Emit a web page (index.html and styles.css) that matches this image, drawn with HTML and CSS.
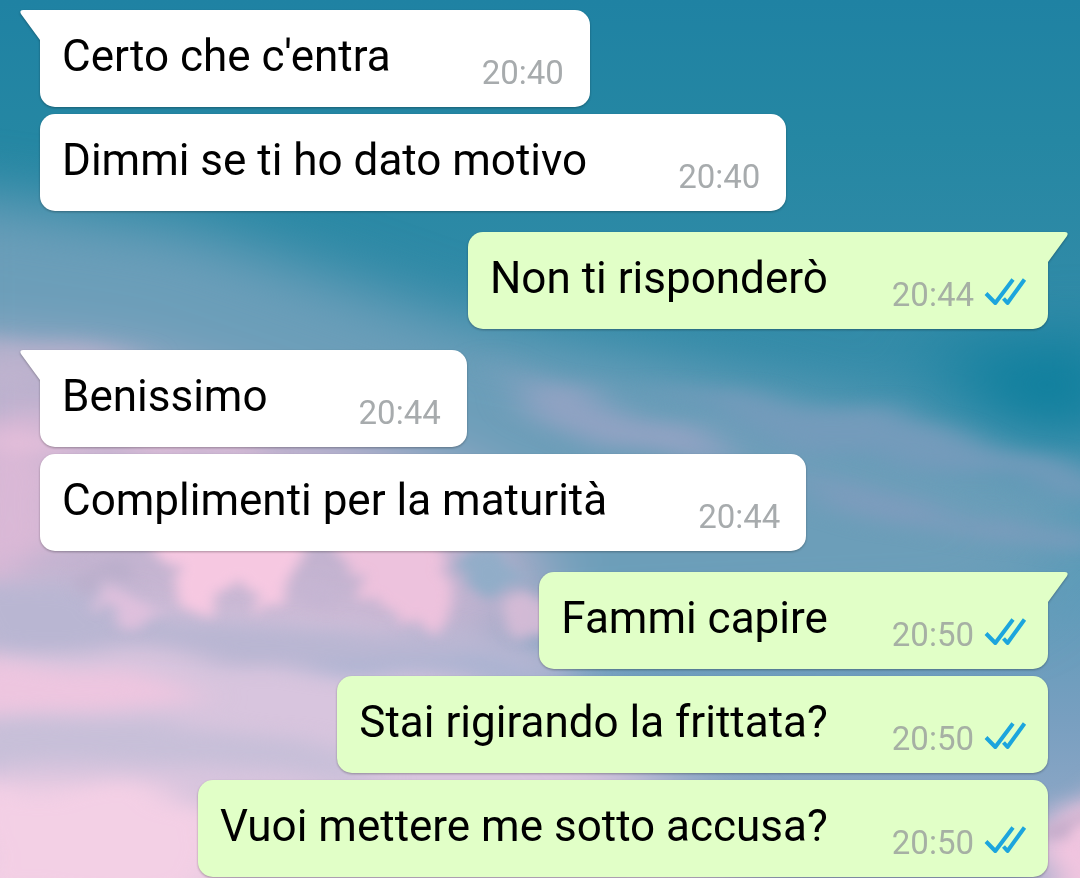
FILE: index.html
```html
<!DOCTYPE html>
<html lang="it">
<head><meta charset="utf-8"/>
<meta name="viewport" content="width=device-width, initial-scale=1">
<title>Chat</title>
<link rel="stylesheet" href="styles.css">
</head>
<body>
<!-- wallpaper: teal sky, pink clouds -->
<svg class="wallpaper" viewBox="0 0 1080 878" preserveAspectRatio="xMidYMid slice" aria-hidden="true">
    <defs>
    <linearGradient id="sky" x1="0" y1="0" x2="0" y2="1">
        <stop offset="0" stop-color="#1f82a3"/>
        <stop offset="0.16" stop-color="#2587a3"/>
        <stop offset="0.4" stop-color="#358ca9"/>
        <stop offset="0.62" stop-color="#549ab7"/>
        <stop offset="0.82" stop-color="#789fc0"/>
        <stop offset="1" stop-color="#9bacca"/>
    </linearGradient>
    <filter id="soft" x="-20%" y="-20%" width="140%" height="140%" color-interpolation-filters="sRGB"><feGaussianBlur stdDeviation="40 30"/></filter>
    <!-- the noise frays the edges into wisps -->
    <filter id="medium" x="-20%" y="-20%" width="140%" height="140%" color-interpolation-filters="sRGB">
        <feTurbulence type="fractalNoise" baseFrequency="0.008 0.03" numOctaves="3" seed="4" result="noise"/>
        <feDisplacementMap in="SourceGraphic" in2="noise" scale="50" xChannelSelector="R" yChannelSelector="G"/>
        <feGaussianBlur stdDeviation="20 9"/>
    </filter>
    <filter id="fine" x="-20%" y="-20%" width="140%" height="140%" color-interpolation-filters="sRGB">
        <feTurbulence type="fractalNoise" baseFrequency="0.03 0.03" numOctaves="3" seed="9" result="noise"/>
        <feDisplacementMap in="SourceGraphic" in2="noise" scale="44" xChannelSelector="R" yChannelSelector="G"/>
        <feGaussianBlur stdDeviation="7 6"/>
    </filter>
    </defs>
    <rect width="1080" height="878" fill="url(#sky)"/>

    <g filter="url(#soft)">
        <path d="M-80 190 L190 230 L450 320 L700 375 L880 420 L1120 500 L1000 620 L560 640 L-80 600Z" fill="#6c9eb9"/>
        <path d="M-80 340 L120 360 L300 410 L500 490 L560 640 L-80 700Z" fill="#c3b3d0"/>
        <path d="M-80 600 L350 620 L560 690 L760 878 L700 960 L-80 960Z" fill="#d8c5de"/>
        <path d="M930 350 L1120 330 V440 L1000 430Z" fill="#0e7f9d"/>
    </g>
    <g filter="url(#medium)">
        <path d="M-40 345 L80 350 L150 362 L20 390 L-40 390Z" fill="#c8b5d0" opacity="0.6"/>
        <path d="M-40 430 L50 410 L60 560 L-40 590Z" fill="#e4bad8" opacity="0.7"/>
        <path d="M-20 450 H250 V438 H-20Z" fill="#eac1dc"/>
        <path d="M490 360 L600 400 L740 452 L690 470 L560 425Z" fill="#9aa4c6" opacity="0.8"/>
        <path d="M640 385 L800 400 L930 420 L1100 475 L1100 495 L960 475 L800 450Z" fill="#749bbb"/>
        <path d="M800 475 L900 500 L1100 535 L1100 560 L920 530 L800 500Z" fill="#7d9cbd"/>
        <path d="M-40 585 L60 580 L190 615 L540 650 L560 690 L300 670 L-40 640Z" fill="#b9b6d2"/>
        <path d="M-40 656 L110 664 L220 700 L-40 715Z" fill="#f1c6df" opacity="0.85"/>
        <path d="M-40 722 L160 722 L360 755 L360 780 L150 760 L-40 762Z" fill="#c7bfd8"/>
        <path d="M-40 785 L170 790 L230 815 L210 900 L-40 900Z" fill="#f6d0e6" opacity="0.9"/>
        <path d="M310 665 H560 V680 H310Z" fill="#a5b2d1"/>
        <path d="M1045 815 L1120 785 V910 H1045Z" fill="#f5c6e0"/>
    </g>
    <g filter="url(#fine)">
        <path d="M155 530 H310 L290 580 L263 622 L250 590 L220 595 L205 613 L180 600Z" fill="#f6c8e1"/>
        <path d="M335 530 H432 L445 590 L456 616 L438 638 L405 625 L370 610Z" fill="#f2c3de" opacity="0.9"/>
        <path d="M85 598 L130 594 L165 612 L146 632 L110 617Z" fill="#e6c2de" opacity="0.8"/>
        <path d="M505 600 L560 588 V645 L510 635Z" fill="#dfbed8" opacity="0.8"/>
        <ellipse cx="483" cy="574" rx="28" ry="16" fill="#91adc8"/>
        <ellipse cx="100" cy="575" rx="34" ry="10" fill="#b9aecb" opacity="0.8"/>
        <ellipse cx="320" cy="598" rx="20" ry="12" fill="#c5b5d2"/>
        <path d="M1030 834 L1090 817 V830 L1040 842Z" fill="#c4abc9"/>
    </g>
</svg>

<!-- shared shapes -->
<svg class="shapes" aria-hidden="true">
    <symbol id="tail" viewBox="0 0 21 31"><path d="M21 0H3Q-1 0 1 4L20 30V31H21Z" fill="currentColor"/></symbol>
    <symbol id="ticks" viewBox="0 0 44 30"><path d="M2 17.5L11.3 27L29 3.5M19.5 22.5L23.5 27L40.5 3.5" fill="none" stroke="currentColor" stroke-width="4" stroke-linejoin="round"/></symbol>
</svg>

<main>
<ol class="chat">
    <li class="message in first">
        <svg class="tail" aria-hidden="true"><use href="#tail"/></svg>
        <p>Certo che c'entra</p>
        <div class="meta"><time>20:40</time></div>
    </li>
    <li class="message in">
        <p>Dimmi se ti ho dato motivo</p>
        <div class="meta"><time>20:40</time></div>
    </li>
    <li class="message out first">
        <svg class="tail" aria-hidden="true"><use href="#tail"/></svg>
        <p>Non ti risponderò</p>
        <div class="meta"><time>20:44</time><svg class="ticks" role="img" aria-label="Letto"><use href="#ticks"/></svg></div>
    </li>
    <li class="message in first">
        <svg class="tail" aria-hidden="true"><use href="#tail"/></svg>
        <p>Benissimo</p>
        <div class="meta"><time>20:44</time></div>
    </li>
    <li class="message in">
        <p>Complimenti per la maturità</p>
        <div class="meta"><time>20:44</time></div>
    </li>
    <li class="message out first">
        <svg class="tail" aria-hidden="true"><use href="#tail"/></svg>
        <p>Fammi capire</p>
        <div class="meta"><time>20:50</time><svg class="ticks" role="img" aria-label="Letto"><use href="#ticks"/></svg></div>
    </li>
    <li class="message out">
        <p>Stai rigirando la frittata?</p>
        <div class="meta"><time>20:50</time><svg class="ticks" role="img" aria-label="Letto"><use href="#ticks"/></svg></div>
    </li>
    <li class="message out">
        <p>Vuoi mettere me sotto accusa?</p>
        <div class="meta"><time>20:50</time><svg class="ticks" role="img" aria-label="Letto"><use href="#ticks"/></svg></div>
    </li>
</ol>
</main>
</body>
</html>
```
FILE: styles.css
```css
body {
    margin: 0;
    background-color: #2887a3;
    font-family: Roboto, "Liberation Sans", sans-serif;
}

.wallpaper {
    position: fixed;
    top: 0;
    left: 0;
    width: 100%;
    height: 100%;
    z-index: -1;
}

.shapes {
    position: absolute;
    width: 0;
    height: 0;
}

.chat {
    display: flex;
    flex-direction: column;
    gap: 7px;
    margin: 0;
    padding: 10px 32px 1px 40px;
    list-style: none;
}

.message {
    position: relative; /* holds the tail */
    display: flex;
    box-sizing: border-box;
    min-height: 97px;
    padding: 20px 26px 14px 22px;
    border-radius: 15px;
    filter: drop-shadow(0 1px 1px rgba(0, 0, 0, 0.3)); /* follows the tail too */
}

.message p {
    margin: 0;
    font-size: 44px;
    line-height: 52px;
    color: #000;
}

.in {
    align-self: flex-start;
    gap: 91px;
    background-color: #fff;
}

.out {
    align-self: flex-end;
    gap: 64px;
    padding-right: 20px;
    background-color: #e1ffc7;
}

/* the other person starts writing */
.in + .out, .out + .in { margin-top: 14px; }
.in.first { border-top-left-radius: 0; }
.out.first { border-top-right-radius: 0; }

.tail {
    position: absolute;
    top: 0;
    width: 21px;
    height: 31px;
}
.in .tail { left: -20px; color: #fff; }
.out .tail { right: -20px; color: #e1ffc7; transform: scaleX(-1); }

.meta {
    display: flex;
    align-items: flex-start;
    align-self: flex-end;
    gap: 10px;
    font-size: 33px;
    line-height: 40px;
    color: #a7abad;
}
.out .meta { color: #a6b0a4; }

.ticks {
    width: 44px;
    height: 30px;
    margin-top: 1px;
    color: #1ca5dd;
}
```
